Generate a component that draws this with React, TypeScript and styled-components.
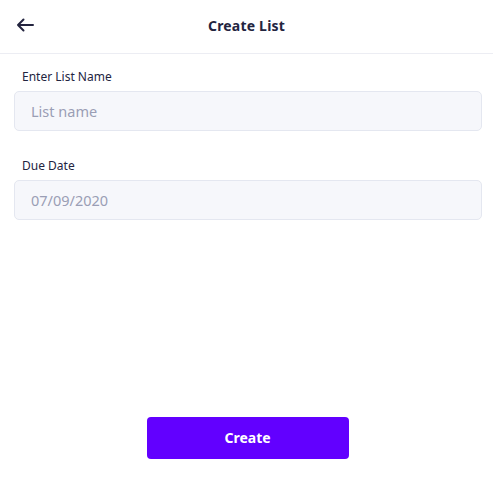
import styled, {createGlobalStyle} from 'styled-components';

const GlobalStyle = createGlobalStyle`
  html, body, #root {
    height: 100%;
  }
  body {
    margin: 0;
    background: #fff;
    font-family: "Noto Sans", "Open Sans", sans-serif;
    color: #23243f;
  }
  * {
    box-sizing: border-box;
  }
`;

export default function App() {
    return (
        <>
            <GlobalStyle/>
            <Page>
                <Header>
                    <BackButton type="button" aria-label="Back">
                        <svg width="18" height="14" viewBox="0 0 18 14" fill="none">
                            <path d="M17 7H2M7.5 1.5L2 7l5.5 5.5" stroke="#23243f" strokeWidth="2" strokeLinecap="round" strokeLinejoin="round"/>
                        </svg>
                    </BackButton>
                    <Title>Create List</Title>
                </Header>

                <Form>
                    <Field>
                        <Label>Enter List Name</Label>
                        <Input placeholder="List name"/>
                    </Field>
                    <Field>
                        <Label>Due Date</Label>
                        <Input placeholder="07/09/2020"/>
                    </Field>
                </Form>

                <Footer>
                    <PrimaryButton type="button">Create</PrimaryButton>
                </Footer>
            </Page>
        </>
    );
}

const Page = styled.div`
  display: flex;
  flex-direction: column;
  min-height: 100%;
`;

const Header = styled.div`
  position: relative;
  height: 54px;
  display: flex;
  align-items: center;
  justify-content: center;
  border-bottom: 1px solid #ecedf3;
`;

const BackButton = styled.button`
  position: absolute;
  left: 16px;
  top: 18px;
  padding: 0;
  border: none;
  background: none;
  display: flex;
  cursor: pointer;
`;

const Title = styled.div`
  font-size: 14px;
  font-weight: 700;
  letter-spacing: 0.2px;
  color: #23243f;
  margin-top: -3px;
`;

const Form = styled.div`
  display: flex;
  flex-direction: column;
  gap: 26px;
  padding: 14px 11px 0 14px;
`;

const Field = styled.div`
  display: flex;
  flex-direction: column;
  gap: 6px;
`;

const Label = styled.label`
  font-size: 12px;
  padding-left: 8px;
  color: #23243f;
  line-height: 17px;
`;

const Input = styled.input`
  height: 40px;
  width: 100%;
  padding: 0 16px;
  border: 1px solid #e4e7f0;
  border-radius: 5px;
  background: #f6f7fb;
  font-family: inherit;
  font-size: 14.5px;
  color: #23243f;
  outline: none;

  &::placeholder {
    color: #9a9eb5;
  }
`;

const Footer = styled.div`
  margin-top: auto;
  display: flex;
  justify-content: center;
  padding: 0 0 40px 2px;
`;

const PrimaryButton = styled.button`
  width: 202px;
  height: 42px;
  border: none;
  border-radius: 4px;
  background: #6200ff;
  color: #fff;
  font-family: inherit;
  font-size: 14px;
  font-weight: 700;
  padding-bottom: 2px;
  cursor: pointer;
`;
